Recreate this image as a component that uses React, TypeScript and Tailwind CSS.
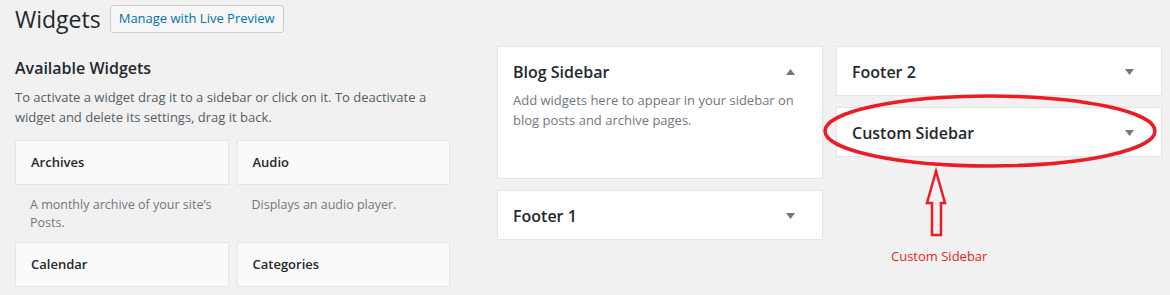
import React from "react";

const FONT = "font-['Open_Sans','Noto_Sans',sans-serif]";

type Widget = { name: string; desc: string };

const widgets: Widget[] = [
  { name: "Archives", desc: "A monthly archive of your site\u2019s Posts." },
  { name: "Audio", desc: "Displays an audio player." },
  { name: "Calendar", desc: "" },
  { name: "Categories", desc: "" },
];

function Arrow({ up }: { up?: boolean }) {
  return (
    <svg width="9" height="6" viewBox="0 0 9 6" className="shrink-0">
      {up ? <path d="M0 6 L4.5 0 L9 6 Z" fill="#72777c" /> : <path d="M0 0 L9 0 L4.5 6 Z" fill="#72777c" />}
    </svg>
  );
}

/** A draggable widget tile from the "Available Widgets" list. */
function WidgetTile({ w }: { w: Widget }) {
  return (
    <div>
      <div className="flex h-[45px] items-center border border-[#e5e5e5] bg-[#fafafa] px-[15px] text-[13px] font-semibold text-[#23282d]">
        {w.name}
      </div>
      {w.desc && (
        <p className="mt-[11px] mb-[10px] px-[15px] text-[12.5px] leading-[18px] text-[#72777c]">{w.desc}</p>
      )}
    </div>
  );
}

/** A sidebar area box, collapsed or open. */
function SidebarBox({ title, open, desc, h }: { title: string; open?: boolean; desc?: string; h: string }) {
  return (
    <div className={`border border-[#e5e5e5] bg-white ${h}`}>
      <div className="flex items-center justify-between pl-[15px] pr-[27px] pt-[14px]">
        <h3 className="text-[16px] font-semibold leading-[22px] text-[#23282d]">{title}</h3>
        <Arrow up={open} />
      </div>
      {desc && <p className="mt-[7px] px-[15px] text-[13px] leading-[20px] text-[#72777c]">{desc}</p>}
    </div>
  );
}

export default function App() {
  return (
    <div className={`relative min-h-[295px] w-[1170px] overflow-hidden bg-[#f1f1f1] pl-[15px] pt-[5px] ${FONT}`}>
      <div className="flex h-[28px] items-center gap-[9px]">
        <h1 className="text-[23px] font-normal leading-[28px] text-[#23282d]">Widgets</h1>
        <button className="h-[28px] rounded-[3px] border border-[#ccc] bg-[#f7f7f7] px-[8px] text-[13px] text-[#0073aa]">
          Manage with Live Preview
        </button>
      </div>

      <div className="mt-[13px] flex items-start">
        <div className="w-[435px] shrink-0">
          <h2 className="mt-[11px] text-[16px] font-semibold leading-[22px] text-[#23282d]">Available Widgets</h2>
          <p className="mt-[8px] text-[13px] leading-[20px] text-[#555d66]">
            To activate a widget drag it to a sidebar or click on it. To deactivate a widget and delete its settings, drag it back.
          </p>
          <div className="mt-[13px] grid grid-cols-2 gap-x-[8px]">
            {widgets.map((w) => (
              <WidgetTile key={w.name} w={w} />
            ))}
          </div>
        </div>

        <div className="ml-[47px] flex w-[326px] shrink-0 flex-col gap-[11px]">
          <SidebarBox
            title="Blog Sidebar"
            open
            h="h-[133px]"
            desc="Add widgets here to appear in your sidebar on blog posts and archive pages."
          />
          <SidebarBox title="Footer 1" h="h-[50px]" />
        </div>

        <div className="ml-[13px] flex w-[326px] shrink-0 flex-col gap-[11px]">
          <SidebarBox title="Footer 2" h="h-[50px]" />
          <SidebarBox title="Custom Sidebar" h="h-[50px]" />
        </div>
      </div>

      {/* red annotation drawn on top of the screenshot */}
      <svg className="pointer-events-none absolute left-0 top-0" width="1170" height="295">
        <ellipse cx="990" cy="131" rx="165" ry="35" fill="none" stroke="#ed1c24" strokeWidth="3.5" />
        <path
          d="M936 171 L945 203 L941 203 L941 235 L932 235 L932 203 L927 203 Z"
          fill="none"
          stroke="#ed1c24"
          strokeWidth="2.5"
          strokeLinejoin="miter"
        />
      </svg>
      <span className="absolute left-[891px] top-[247px] text-[13px] text-[#ed1c24]">Custom Sidebar</span>
    </div>
  );
}
